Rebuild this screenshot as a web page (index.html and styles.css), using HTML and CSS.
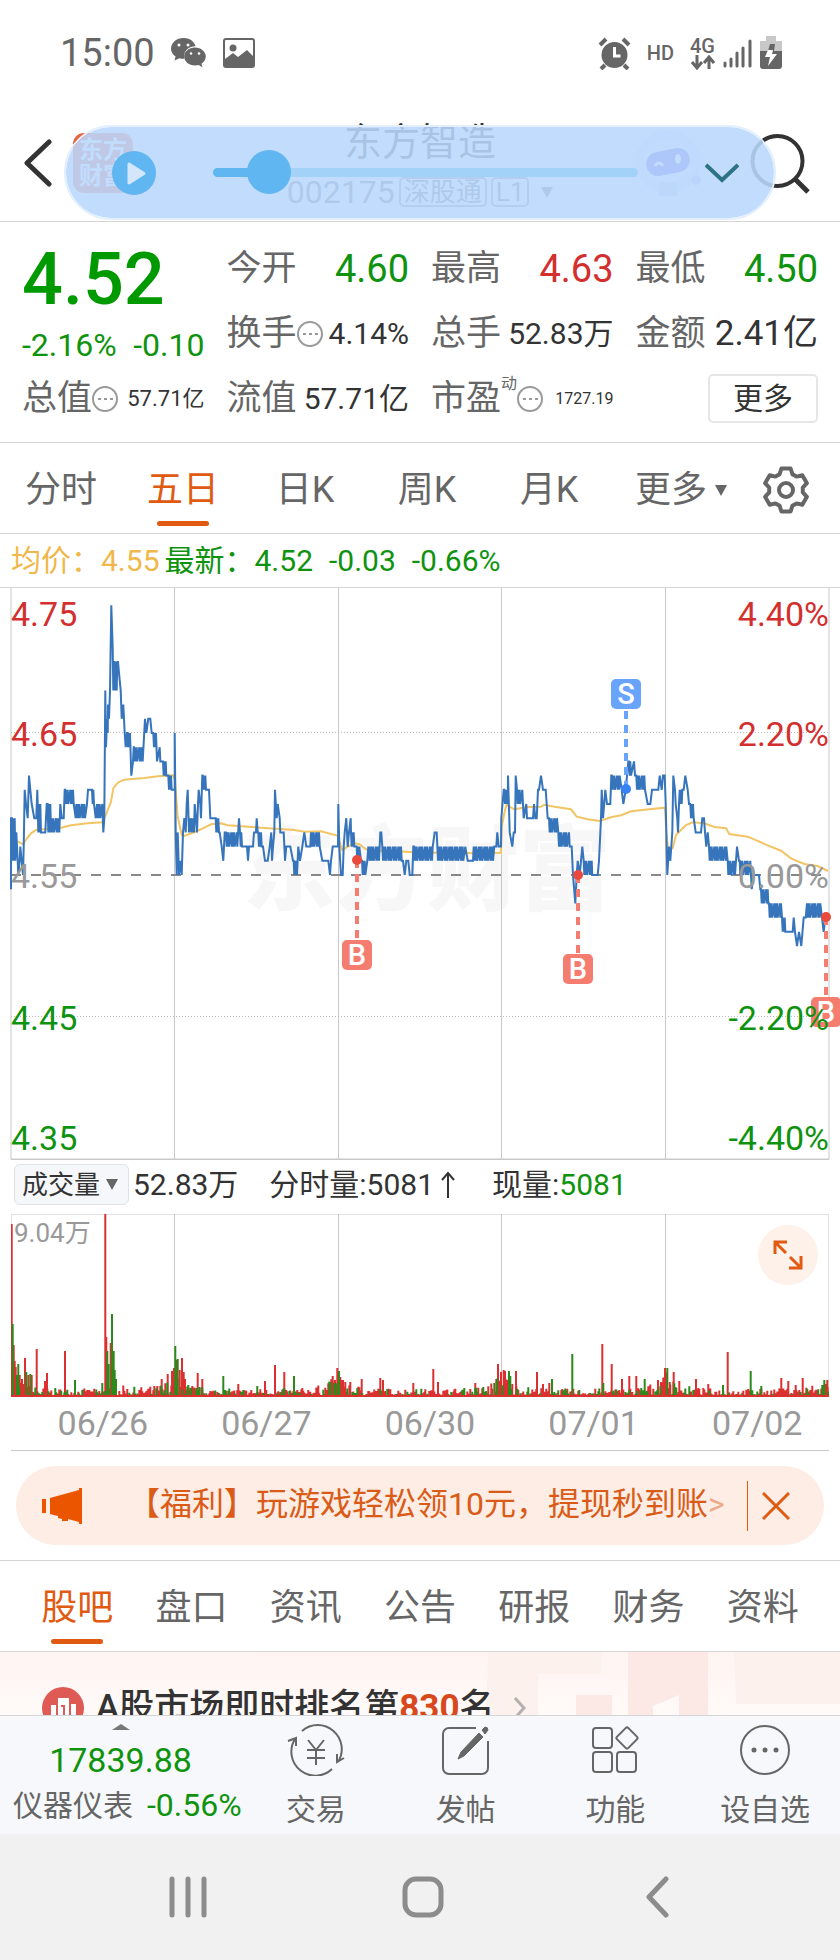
FILE: index.html
```html
<!DOCTYPE html>
<html lang="zh-CN">
<head>
  <meta charset="UTF-8">
  <meta name="viewport" content="width=device-width, initial-scale=1.0">
  <title>东方智造 002175</title>
  <link rel="stylesheet" href="styles.css">
</head>
<body>
  <div class="status-bar">
    <span class="clock">15:00</span>
    <svg class="status-icon" width="36" height="30" viewBox="0 0 36 30" fill="#666">
      <path d="M12.500 0C5.500 0 0 4.700 0 10.500c0 3.300 1.800 6.200 4.600 8.100L3.500 22.600l4.800-2.400c1.300.4 2.700.6 4.200.6l1-.1C13.300 19.900 13.200 19 13.200 18c0-5.600 5-9.700 11.300-9.700C23.500 3.500 18.500 0 12.500 0z"/>
      <path d="M24 9.500c-6 0-10.800 4-10.800 9s4.800 9 10.800 9c1.300 0 2.500-.2 3.600-.5l3.900 2.200-1-3.500c2.700-1.700 4.300-4.300 4.300-7.200 0-5-4.800-9-10.800-9z"/>
      <circle cx="8" cy="7" r="1.500" fill="#fff"/><circle cx="17" cy="7" r="1.500" fill="#fff"/>
      <circle cx="20" cy="15.500" r="1.300" fill="#fff"/><circle cx="28" cy="15.500" r="1.300" fill="#fff"/>
    </svg>
    <svg class="status-icon" width="32" height="30" viewBox="0 0 32 30">
      <rect x="1" y="1" width="30" height="28" rx="2" fill="#fff" stroke="#666" stroke-width="2"/>
      <circle cx="10" cy="10" r="3.500" fill="#666"/>
      <path d="M2 21l8-6 5 4 9-7 6 6v10H2z" fill="#666"/>
    </svg>
    <div class="status-right">
      <svg width="33" height="33" viewBox="0 0 33 33" fill="none" stroke="#666">
        <circle cx="16.500" cy="18" r="13" fill="#666" stroke="none"/>
        <path d="M2 8l6-6M31 8l-6-6M7 28l-4 4M26 28l4 4" stroke-width="4"/>
        <path d="M16.500 10v9h6" stroke="#fff" stroke-width="3"/>
      </svg>
      <span class="hd">HD</span>
      <span class="network">
        <span>4G</span>
        <svg width="24" height="15" viewBox="0 0 24 15" fill="none" stroke="#666" stroke-width="3">
          <path d="M6 0v12M1 7l5 6 5-6M18 14V3M13 8l5-6 5 6"/>
        </svg>
      </span>
      <svg width="29" height="30" viewBox="0 0 29 30" stroke="#666" stroke-width="3" stroke-linecap="round">
        <path d="M2 25v3M8 21v7M14 15v13M20 10v18M27 3v25"/>
      </svg>
      <svg class="battery" width="22" height="34" viewBox="0 0 22 34">
        <path d="M6 0h10v5h6v12H0V5h6z" fill="#c8c8c8"/>
        <path d="M0 15h22v15a3 3 0 0 1-3 3H3a3 3 0 0 1-3-3z" fill="#666"/>
        <path d="M10 8l-2 7h6l1-7z" fill="#666"/>
        <path d="M8 14h5l-1 4h5L8 30l2-9H5z" fill="#fff"/>
      </svg>
    </div>
  </div>

  <header class="header">
    <div class="header-left">
      <a class="icon-link" href="#" aria-label="返回">
        <svg width="28" height="48" viewBox="0 0 28 48" fill="none" stroke="#333" stroke-width="5" stroke-linecap="round" stroke-linejoin="round">
          <path d="M25 3L3 24l22 21"/>
        </svg>
      </a>
      <div class="logo">东方<br>财富</div>
    </div>
    <div class="stock">
      <h1>东方智造</h1>
      <p class="stock-code">002175 <span class="tag">深股通</span><span class="tag">L1</span><span class="tri"></span></p>
    </div>
    <div class="header-right">
      <svg width="66" height="70" viewBox="0 0 66 70">
        <circle cx="32" cy="34" r="32" fill="#e9ebf2"/>
        <ellipse cx="31" cy="33" rx="24" ry="22" fill="#f5f7fb"/>
        <rect x="10" y="22" width="44" height="24" rx="12" fill="#5a55e0" transform="rotate(-12 32 34)"/>
        <path d="M19 38q4-6 8 0" fill="none" stroke="#fff" stroke-width="3"/>
        <ellipse cx="42" cy="31" rx="3" ry="5" fill="#fff"/>
        <path d="M24 54l-2 14h20l-2-14z" fill="#cfd5e2"/>
        <circle cx="60" cy="52" r="5" fill="#bcc6da"/>
      </svg>
      <a class="icon-link" href="#" aria-label="搜索">
        <svg width="60" height="62" viewBox="0 0 60 62" fill="none" stroke="#333" stroke-width="4">
          <circle cx="27.500" cy="29" r="25"/>
          <path d="M45 47l13 13" stroke-width="5"/>
        </svg>
      </a>
    </div>
    <!-- floating player -->
    <div class="player">
      <button class="play-btn" aria-label="播放">
        <svg width="44" height="44" viewBox="0 0 44 44">
          <path d="M17 13l15 9.500L17 32z" fill="#d3e6fb" stroke="#d3e6fb" stroke-width="3" stroke-linejoin="round"/>
        </svg>
      </button>
      <input class="player-range" type="range" min="0" max="100" value="9" aria-label="播放进度">
      <button class="fold-btn" aria-label="收起">
        <svg width="34" height="20" viewBox="0 0 34 20" fill="none" stroke="#2d7286" stroke-width="4">
          <path d="M1 2l16 15L33 2"/>
        </svg>
      </button>
    </div>
  </header>

  <section class="quote">
    <div class="price-block">
      <p class="price">4.52</p>
      <p class="change"><span>-2.16%</span><span>-0.10</span></p>
    </div>
    <div class="cell"><span class="label">今开</span><span class="value-xl down">4.60</span></div>
    <div class="cell"><span class="label">最高</span><span class="value-xl up">4.63</span></div>
    <div class="cell"><span class="label">最低</span><span class="value-xl down">4.50</span></div>
    <div class="cell">
      <span class="label">换手<svg class="dots" viewBox="0 0 26 26"><circle cx="13" cy="13" r="12"/><path d="M6 13h3M12 13h3M18 13h3"/></svg></span>
      <span class="value-md">4.14%</span>
    </div>
    <div class="cell"><span class="label">总手</span><span class="value-md">52.83万</span></div>
    <div class="cell"><span class="label">金额</span><span class="value-lg">2.41亿</span></div>
    <div class="cell">
      <span class="label">总值<svg class="dots" viewBox="0 0 26 26"><circle cx="13" cy="13" r="12"/><path d="M6 13h3M12 13h3M18 13h3"/></svg></span>
      <span class="value-sm">57.71亿</span>
    </div>
    <div class="cell"><span class="label">流值</span><span class="value-md">57.71亿</span></div>
    <div class="cell">
      <span class="label">市盈<small class="sup">动</small><svg class="dots" viewBox="0 0 26 26"><circle cx="13" cy="13" r="12"/><path d="M6 13h3M12 13h3M18 13h3"/></svg></span>
      <span class="value-xs">1727.19</span>
    </div>
    <div class="cell cell-end"><button class="more-btn">更多</button></div>
  </section>

  <nav class="period-tabs">
    <a href="#">分时</a>
    <a class="active" href="#">五日</a>
    <a href="#">日K</a>
    <a href="#">周K</a>
    <a href="#">月K</a>
    <a href="#">更多<span class="tri"></span></a>
    <a href="#" aria-label="设置">
      <svg width="48" height="48" viewBox="0 0 48 48" fill="none" stroke="#666" stroke-width="4" stroke-linejoin="round">
        <path d="M28.600 2.500L30.400 8.200 34.500 10.600 40.300 9.300 44.900 17.200 40.800 21.600V26.400L44.900 30.800 40.300 38.700 34.500 37.400 30.400 39.800 28.600 45.500H19.400L17.600 39.800 13.500 37.400 7.700 38.700 3.100 30.800 7.200 26.400V21.600L3.100 17.200 7.700 9.300 13.500 10.600 17.600 8.200 19.400 2.500z"/>
        <circle cx="24" cy="24" r="7"/>
      </svg>
    </a>
  </nav>

  <p class="legend"><span class="avg">均价：4.55</span><span>最新：4.52</span><span class="gap">-0.03</span><span class="gap">-0.66%</span></p>

  <section class="charts">
    <svg class="price-chart" viewBox="0 0 818 571">
      <text class="watermark" x="232" y="315">东方财富</text>
      <path class="frame" d="M0 0V571H818V0M163.500 0V571M327.500 0V571M490.500 0V571M654.500 0V571"/>
      <path class="dotted" d="M0 144.500H818M0 428.500H818"/>
      <path class="zero" d="M0 287H818"/>
      <path id="avgLine" class="avg-line"/>
      <path id="priceLine" class="price-line"/>
      <g class="mark sell">
        <path d="M615 123V200"/><circle cx="615" cy="201" r="5"/>
        <rect x="600" y="91" width="30" height="30" rx="5"/><text x="615" y="116">S</text>
      </g>
      <g class="mark buy">
        <path d="M346 272V352"/><circle cx="346" cy="272" r="5"/>
        <rect x="331" y="352" width="30" height="30" rx="5"/><text x="346" y="377">B</text>
      </g>
      <g class="mark buy">
        <path d="M567 287V366"/><circle cx="567" cy="287" r="5"/>
        <rect x="552" y="366" width="30" height="30" rx="5"/><text x="567" y="391">B</text>
      </g>
      <g class="mark buy">
        <path d="M815 329V409"/><circle cx="815" cy="329" r="5"/>
        <rect x="800" y="409" width="30" height="30" rx="5"/><text x="815" y="434">B</text>
      </g>
      <g class="axis">
        <text class="up" x="0" y="38">4.75</text>
        <text class="up" x="0" y="158">4.65</text>
        <text class="flat" x="0" y="300">4.55</text>
        <text class="down" x="0" y="442">4.45</text>
        <text class="down" x="0" y="562">4.35</text>
      </g>
      <g class="axis axis-right">
        <text class="up" x="818" y="38">4.40%</text>
        <text class="up" x="818" y="158">2.20%</text>
        <text class="flat" x="818" y="300">0.00%</text>
        <text class="down" x="818" y="442">-2.20%</text>
        <text class="down" x="818" y="562">-4.40%</text>
      </g>
    </svg>

    <div class="volume-head">
      <span class="select-box">
        <select aria-label="指标"><option>成交量</option></select>
        <span class="tri"></span>
      </span>
      <span class="vol-total">52.83万</span>
      <span class="vol-minute">分时量:5081<svg width="20" height="28" viewBox="0 0 20 28" fill="none" stroke="#333" stroke-width="2"><path d="M10 27V2M4 9l6-7 6 7"/></svg></span>
      <span>现量:<span class="down">5081</span></span>
    </div>

    <div class="volume-wrap">
      <svg class="volume-chart" viewBox="0 0 818 183">
        <path class="frame" d="M0 183V0H818V183M163.500 0V183M327.500 0V183M490.500 0V183M654.500 0V183"/>
        <path id="volUp" class="vol-up"/>
        <path id="volDown" class="vol-down"/>
        <path class="vol-up" d="M0 182H818"/>
        <text class="vol-max" x="3" y="28">9.04万</text>
      </svg>
      <button class="expand-btn" aria-label="全屏">
        <svg width="30" height="30" viewBox="0 0 30 30" fill="none" stroke="#e05a12" stroke-width="3">
          <path d="M14 2H2v12M2 2l11 11M16 28h12V16M28 28L17 17"/>
        </svg>
      </button>
    </div>
    <div class="dates"><span>06/26</span><span>06/27</span><span>06/30</span><span>07/01</span><span>07/02</span></div>
  </section>

  <div class="banner">
    <svg width="40" height="36" viewBox="0 0 40 36" fill="#eb5500">
      <path d="M0 11h4v14H0zM8 10L37 2V0h3v36h-3v-2l-11-3v2h-6v-2l-4-1v-2l-8-2z"/>
    </svg>
    <a class="banner-text" href="#">【福利】玩游戏轻松领10元，提现秒到账<span class="fade">&gt;</span></a>
    <button class="close-btn" aria-label="关闭">
      <svg width="28" height="28" viewBox="0 0 28 28" fill="none" stroke="#e05a12" stroke-width="3"><path d="M1 1l26 26M27 1L1 27"/></svg>
    </button>
  </div>

  <nav class="info-tabs">
    <a class="active" href="#">股吧</a>
    <a href="#">盘口</a>
    <a href="#">资讯</a>
    <a href="#">公告</a>
    <a href="#">研报</a>
    <a href="#">财务</a>
    <a href="#">资料</a>
  </nav>

  <section class="rank">
    <svg class="rank-bg" width="354" height="63" viewBox="0 0 354 63">
      <path d="M2 0h113v22H52v41H0z" fill="#fdf1ee"/>
      <path d="M142 0h80v63h-29V43l-26 11v9h-25zM90 43h36v20H90z" fill="#fce8e5"/>
      <path d="M248 0h106v52h-104z" fill="#fdf1ee"/>
    </svg>
    <svg class="rank-icon" width="42" height="42" viewBox="0 0 42 42">
      <circle cx="21" cy="21" r="21" fill="#df5a55"/>
      <path d="M9 34V18h5v16zM16 34V11h11v23zM29 34V17h5v17z" fill="#fff"/>
      <path d="M19 19h3v9" fill="none" stroke="#df5a55" stroke-width="2"/>
    </svg>
    <a class="rank-text" href="#">A股市场即时排名第<em>830</em>名</a>
    <svg class="rank-icon" width="12" height="32" viewBox="0 0 12 32" fill="none" stroke="#b5b0b0" stroke-width="3"><path d="M1 6l9 10-9 10"/></svg>
  </section>

  <nav class="bottom-nav">
    <a class="index" href="#">
      <span class="tri-up"></span>
      <span class="index-value">17839.88</span>
      <span class="index-name">仪器仪表<b>-0.56%</b></span>
    </a>
    <a href="#">
      <svg width="58" height="52" viewBox="0 0 58 52" fill="none" stroke="#666" stroke-width="2">
        <path d="M15 7A24 24 0 0 1 51 38M45 45A24 24 0 0 1 8 15M1 17l8-3v8M50 30v8l7-4M21 16l8 10 8-10M29 26v15M20 26h18M20 34h18"/>
      </svg>
      交易
    </a>
    <a href="#">
      <svg width="50" height="52" viewBox="0 0 50 52" fill="none" stroke="#666" stroke-width="2">
        <path d="M35 4H8a6 6 0 0 0-6 6v34a6 6 0 0 0 6 6h33a6 6 0 0 0 6-6V17"/>
        <path d="M38 9l4 4-19 19-6 3 3-7zM41 6l3-3q3 0 3 3l-3 4z" fill="#666" stroke-width="1"/>
      </svg>
      发帖
    </a>
    <a href="#">
      <svg width="48" height="52" viewBox="0 0 48 52" fill="none" stroke="#666" stroke-width="2">
        <rect x="2" y="4" width="19" height="20" rx="3"/>
        <rect x="2" y="28" width="19" height="20" rx="3"/>
        <rect x="26" y="28" width="19" height="20" rx="3"/>
        <rect x="28" y="6" width="16" height="16" rx="2" transform="rotate(45 36 14)"/>
      </svg>
      功能
    </a>
    <a href="#">
      <svg width="50" height="52" viewBox="0 0 50 52" fill="none" stroke="#666" stroke-width="2">
        <circle cx="25" cy="26" r="24"/>
        <path d="M14 26h.01M25 26h.01M36 26h.01" stroke-width="5" stroke-linecap="round"/>
      </svg>
      设自选
    </a>
  </nav>

  <div class="system-nav">
    <button aria-label="最近任务"><svg width="38" height="42" viewBox="0 0 38 42" stroke="#8c8c8c" stroke-width="5" stroke-linecap="round"><path d="M3 3v36M19 3v36M35 3v36"/></svg></button>
    <button aria-label="主屏幕"><svg width="42" height="42" viewBox="0 0 42 42" fill="none" stroke="#8c8c8c" stroke-width="5"><rect x="3" y="3" width="36" height="36" rx="11"/></svg></button>
    <button aria-label="后退"><svg width="24" height="42" viewBox="0 0 24 42" fill="none" stroke="#8c8c8c" stroke-width="5" stroke-linecap="round" stroke-linejoin="round"><path d="M20 3L3 21l17 18"/></svg></button>
  </div>

  <script src="chart.js"></script>
</body>
</html>
```

FILE: styles.css
```css
* {
  box-sizing: border-box;
}

body {
  margin: 0;
  background-color: #fff;
  color: #333;
  font-family: Roboto, "Noto Sans CJK SC", sans-serif;
}

h1, p {
  margin: 0;
  font-weight: 400;
}

a {
  color: inherit;
  text-decoration: none;
}

button {
  border: none;
  padding: 0;
  background: none;
  color: inherit;
  font-family: inherit;
  cursor: pointer;
}

svg {
  display: block;
  flex: none;
}

.up {
  color: #d32f2f;
  fill: #d32f2f;
}

.down {
  color: #0f930f;
  fill: #0f930f;
}

.flat {
  fill: #999;
}

.tri {
  border: 6px solid transparent;
  border-top: 11px solid #666;
  border-bottom: none;
}

/* Status bar */
.status-bar {
  display: flex;
  align-items: center;
  gap: 16px;
  height: 104px;
  padding: 2px 58px 0 60px;
  color: #666;
}

.clock {
  font-size: 38px;
}

.status-right {
  display: flex;
  align-items: center;
  gap: 8px;
  margin-left: auto;
}

.hd {
  margin: 0 8px;
  font-size: 20px;
  font-weight: 500;
}

.network {
  display: flex;
  flex-direction: column;
  align-items: center;
  font-size: 20px;
  font-weight: 500;
  line-height: 18px;
}

/* Header */
.header {
  position: relative;
  display: grid;
  grid-template-columns: 1fr auto 1fr;
  height: 118px;
  border-bottom: 1px solid #d5d5d5;
}

.header-left,
.header-right {
  display: flex;
  align-items: center;
}

.header-left {
  gap: 21px;
  padding-left: 24px;
}

.header-right {
  justify-content: flex-end;
  gap: 48px;
  padding-right: 30px;
}

.logo {
  width: 60px;
  height: 60px;
  padding: 4px 0;
  border-radius: 11px;
  background-color: #e8623a;
  color: #fff;
  font-size: 24px;
  font-weight: 700;
  line-height: 26px;
  text-align: center;
}

.stock {
  padding-top: 13px;
  text-align: center;
}

.stock h1 {
  font-size: 38px;
  line-height: 50px;
}

.stock-code {
  display: flex;
  align-items: center;
  justify-content: center;
  gap: 4px;
  color: #666;
  font-size: 32px;
  line-height: 50px;
}

.tag {
  padding: 0 3px;
  border: 2px solid #888;
  border-radius: 5px;
  font-size: 26px;
  line-height: 26px;
}

.stock-code .tri {
  margin-left: 8px;
}

.player {
  position: absolute;
  top: 21px;
  left: 64px;
  right: 64px;
  display: flex;
  align-items: center;
  height: 95px;
  padding: 0 35px 0 46px;
  border: 2px solid #e3effd;
  border-radius: 48px;
  background-color: rgba(184, 215, 253, 0.88);
  background-clip: padding-box;
}

.play-btn {
  width: 44px;
  height: 44px;
  border-radius: 50%;
  background-color: #60b6f0;
}

.player-range {
  flex: 1;
  height: 44px;
  margin: 0 67px 0 57px;
  background: none;
  appearance: none;
}

.player-range::-webkit-slider-runnable-track {
  height: 9px;
  border-radius: 5px;
  background: linear-gradient(to right, #60b6f0 10%, #a3d2f8 10%);
}

.player-range::-webkit-slider-thumb {
  width: 44px;
  height: 44px;
  margin-top: -18px;
  border-radius: 50%;
  background-color: #60b6f0;
  appearance: none;
}

/* Quote */
.quote {
  display: grid;
  grid-template-columns: repeat(4, 1fr);
  grid-auto-rows: 65px;
  column-gap: 22px;
  padding: 14px 22px 11px;
  border-bottom: 1px solid #d5d5d5;
}

.price-block {
  grid-row: span 2;
  color: #009a00;
}

.price {
  font-size: 72px;
  font-weight: 500;
  line-height: 88px;
}

.change {
  display: flex;
  justify-content: space-between;
  color: #0f930f;
  font-size: 32px;
  line-height: 42px;
}

.cell {
  display: flex;
  align-items: center;
  justify-content: space-between;
  line-height: 50px;
  white-space: nowrap;
}

.cell-end {
  justify-content: flex-end;
}

.label {
  display: flex;
  align-items: center;
  color: #666;
  font-size: 35px;
}

.sup {
  align-self: flex-start;
  font-size: 16px;
  line-height: 20px;
}

.dots {
  width: 26px;
  height: 26px;
  fill: none;
  stroke: #999;
  stroke-width: 2;
}

.value-xl {
  font-size: 38px;
}

.value-lg {
  font-size: 35px;
}

.value-md {
  font-size: 30px;
}

.value-sm {
  font-size: 22px;
}

.value-xs {
  font-size: 16px;
}

.more-btn {
  padding: 0 23px;
  border: 2px solid #e6e6e6;
  border-radius: 5px;
  font-size: 30px;
  line-height: 45px;
}

/* Tabs */
.period-tabs,
.info-tabs {
  display: grid;
  border-bottom: 1px solid #d5d5d5;
  color: #666;
  font-size: 36px;
  line-height: 86px;
}

.period-tabs {
  grid-template-columns: repeat(5, 1fr) 142px 68px;
  padding-right: 20px;
}

.info-tabs {
  grid-template-columns: repeat(7, 1fr);
  padding: 0 20px;
  border-top: 1px solid #d5d5d5;
}

.period-tabs a,
.info-tabs a {
  position: relative;
  display: flex;
  align-items: center;
  justify-content: center;
  height: 90px;
  padding-top: 4px;
}

.period-tabs .tri {
  margin-left: 8px;
}

.active {
  color: #e05a12;
}

.active::after {
  content: "";
  position: absolute;
  bottom: 7px;
  left: 50%;
  width: 52px;
  height: 5px;
  margin-left: -26px;
  border-radius: 3px;
  background-color: #e05a12;
}

/* Charts */
.legend {
  display: flex;
  padding-left: 11px;
  color: #0f930f;
  font-size: 30px;
  line-height: 53px;
}

.avg {
  margin-right: 5px;
  color: #f0b84c;
}

.gap {
  margin-left: 16px;
}

.charts {
  padding: 0 11px;
  border-top: 1px solid #d5d5d5;
}

.price-chart {
  width: 100%;
  overflow: visible;
}

.frame {
  fill: none;
  stroke: #c8c8c8;
}

.dotted {
  stroke: #bbb;
  stroke-dasharray: 1 2;
}

.zero {
  stroke: #888;
  stroke-width: 2;
  stroke-dasharray: 10 10;
}

.avg-line {
  fill: none;
  stroke: #f2c464;
  stroke-width: 2;
}

.price-line {
  fill: none;
  stroke: #3674bb;
  stroke-width: 2;
}

.watermark {
  fill: #f7f7f7;
  font-size: 92px;
  font-weight: 900;
}

.mark path {
  stroke-width: 4;
  stroke-dasharray: 8 6;
}

.mark text {
  fill: #fff;
  stroke: none;
  font-size: 29px;
  font-weight: 500;
  text-anchor: middle;
}

.sell {
  fill: #68a4fb;
  stroke: #68a4fb;
}

.buy {
  fill: #f57d70;
  stroke: #f57d70;
}

.sell circle {
  fill: #3583f5;
}

.buy circle {
  fill: #ea4a3e;
}

.mark rect,
.mark circle {
  stroke: none;
}

.axis {
  font-size: 34px;
}

.axis-right {
  text-anchor: end;
}

.volume-head {
  display: flex;
  align-items: center;
  height: 55px;
  padding: 0 0 1px 3px;
  border-top: 1px solid #c8c8c8;
  font-size: 30px;
  line-height: 44px;
}

.volume-head > span {
  margin-bottom: 4px;
}

.select-box {
  display: flex;
  align-items: center;
  padding: 0 10px 0 7px;
  border: 1px solid #e0e2e6;
  border-radius: 6px;
  background-color: #f6f7fa;
}

.select-box select {
  width: 84px;
  height: 39px;
  padding: 0;
  border: none;
  background: none;
  color: #333;
  font-family: inherit;
  font-size: 26px;
  appearance: none;
}

.vol-total {
  margin: 0 31px 0 4px;
}

.vol-minute {
  display: flex;
  align-items: center;
  margin-right: 34px;
}

.vol-minute svg {
  margin-left: 4px;
}

.volume-wrap {
  position: relative;
}

.volume-chart {
  width: 100%;
}

.vol-up {
  stroke: #dc2f2f;
}

.vol-down {
  stroke: #2c8a1c;
}

.vol-up,
.vol-down {
  fill: none;
  stroke-width: 2;
}

.vol-max {
  fill: #999;
  font-size: 26px;
}

.expand-btn {
  position: absolute;
  top: 11px;
  right: 11px;
  display: flex;
  align-items: center;
  justify-content: center;
  width: 60px;
  height: 60px;
  border-radius: 50%;
  background-color: #fef1ea;
}

.dates {
  display: grid;
  grid-template-columns: repeat(5, 1fr);
  border-bottom: 1px solid #c8c8c8;
  color: #999;
  font-size: 34px;
  line-height: 53px;
  text-align: center;
}

.dates span {
  padding-left: 20px;
}

/* Banner */
.banner {
  display: flex;
  align-items: center;
  height: 79px;
  margin: 15px 16px;
  padding: 0 34px 0 26px;
  border-radius: 40px;
  background-color: #fdede4;
  color: #d95b17;
  font-size: 32px;
}

.banner-text {
  flex: 1;
  margin-left: 46px;
  padding-bottom: 4px;
  line-height: 44px;
  white-space: nowrap;
}

.fade {
  opacity: 0.45;
}

.close-btn {
  padding: 11px 0 11px 15px;
  background: linear-gradient(#e05a12, #e05a12) left center / 1px 50px no-repeat;
}

/* Rank teaser, cut off by the bottom bar */
.rank {
  position: relative;
  display: flex;
  align-items: center;
  height: 63px;
  padding: 48px 0 0 42px;
  overflow: hidden;
  background: linear-gradient(#fff4f2, #fffaf8);
}

.rank-bg {
  position: absolute;
  top: 0;
  right: 0;
}

.rank-icon,
.rank-text {
  position: relative;
}

.rank-text {
  margin: 0 20px 0 12px;
  font-size: 35px;
  font-weight: 500;
  line-height: 48px;
  white-space: nowrap;
}

.rank-text em {
  color: #d8481c;
  font-style: normal;
  font-weight: 700;
}

/* Bottom nav */
.bottom-nav {
  display: grid;
  grid-template-columns: 241px repeat(4, 1fr);
  height: 119px;
  border-top: 1px solid #d5d5d5;
  background-color: #f7f8fb;
  color: #666;
  font-size: 30px;
}

.bottom-nav a {
  display: flex;
  flex-direction: column;
  align-items: center;
  padding-top: 8px;
  line-height: 44px;
}

.bottom-nav a svg {
  margin-bottom: 12px;
}

.tri-up {
  border: 9px solid transparent;
  border-top: none;
  border-bottom: 6px solid #777;
}

.bottom-nav .index-value {
  color: #0f930f;
  font-size: 34px;
  line-height: 60px;
}

.bottom-nav .index-name {
  align-self: flex-start;
  padding-left: 13px;
  line-height: 30px;
  white-space: nowrap;
}

.index-name b {
  margin-left: 14px;
  color: #0f930f;
  font-size: 32px;
  font-weight: 400;
}

.system-nav {
  display: grid;
  grid-template-columns: repeat(3, 1fr);
  height: 126px;
  padding: 0 65px 0 70px;
  background-color: #f1f1f1;
}

.system-nav button {
  display: flex;
  align-items: center;
  justify-content: center;
}
```

FILE: chart.js
```javascript
// x is in thirds of a chart pixel, the second value is ticks of 0.01 from 4.55.
// Four values mean a band: from x, to x, low tick, high tick.
var prices = [
  // 06/26
  [0,-1],[0,4],[3,14,1,4],[16,3],[20,1],[22,0],[26,1],[28,2],[32,1],[36,0],[38,2],[41,6],[45,5],[50,4],[54,7],[58,6],[62,5],[70,4],[76,4],[79,6],
  [80,92,3,5],[94,3],[103,3],[107,5],[110,118,3,5],[119,146,3,4],[148,5],[152,4],[158,4],[161,6],[162,192,5,6],[194,4],[196,228,4,5],
  [231,6],[240,6],[243,250,5,6],[254,4],[258,274,4,5],[277,3],[280,4],[283,13],[285,9],[288,11],[290,10],[291,12],[294,11],[297,13],
  [301,19],[305,16],[307,13],[310,15],[311,320,13,15],[321,15],[325,14],[329,13],[332,11],[337,12],[341,10],[344,9],[348,10],[349,358,9,10],
  [361,7],[366,8],[368,9],[369,398,8,9],[402,11],[406,10],[412,11],[418,11],[422,10],[427,436,9,10],[438,8],[446,9],[448,8],[454,8],
  [456,470,7,8],[472,486,6,7],[489,6],[491,6],
  // 06/27
  [491,10],[494,3],[497,0],[500,3],[504,0],[508,1],[512,0],[516,3],[520,4],[524,3],[527,5],[530,6],[534,3],[539,550,3,4],[551,5],[558,3],
  [561,5],[563,6],[568,5],[570,4],[574,7],[575,590,6,7],[594,6],[598,4],[613,4],[614,624,3,4],[626,3],[632,2],[637,1],[641,3],
  [645,680,2,3],[684,4],[687,694,2,3],[708,2],[711,1],[714,2],[726,2],[729,3],[735,3],[737,4],[740,3],[742,752,2,3],[756,2],[762,1],
  [770,1],[776,2],[781,3],[783,1],[786,2],[790,3],[792,6],[797,4],[800,5],[806,4],[808,3],[818,3],[822,1],[826,2],[838,2],[846,1],
  [848,858,0,1],[862,2],[867,1],[874,2],[880,3],[886,2],[898,2],[900,930,2,3],[934,1],[952,1],[957,0],[960,1],[965,2],[981,2],
  // 06/30
  [982,5],[985,2],[990,0],[995,0],[998,2],[1001,3],[1006,4],[1010,2],[1014,3],[1019,4],[1020,1034,2,3],[1037,1046,1,2],[1050,1],
  [1053,1069,0,1],[1072,2],[1076,1],[1078,1104,1,2],[1108,3],[1111,3],[1114,1172,1,2],[1176,1],[1181,0],[1186,1],[1192,1],[1196,0],
  [1204,0],[1207,2],[1209,1265,1,2],[1271,3],[1277,3],[1281,1],[1283,1364,1,2],[1370,1],[1386,1],[1388,1446,1,2],[1450,2],[1456,2],[1459,3],[1463,2],[1470,2],
  // 07/01
  [1471,4],[1478,6],[1480,1490,5,6],[1491,7],[1496,3],[1504,2],[1508,3],[1512,3],[1514,7],[1518,1536,5,6],[1538,4],[1546,5],[1548,4],
  [1566,4],[1569,5],[1573,4],[1577,4],[1581,6],[1584,6],[1590,7],[1596,6],[1604,6],[1610,4],[1614,1638,3,4],[1642,1676,2,3],[1682,2],
  [1686,0],[1693,-2],[1697,0],[1700,1],[1706,0],[1714,2],[1718,1748,0,1],[1754,0],[1760,0],[1764,1],[1770,4],[1772,6],[1776,4],
  [1783,6],[1788,5],[1798,5],[1801,7],[1802,1826,6,7],[1832,6],[1837,5],[1844,6],[1848,7],[1852,8],[1854,1860,7,8],[1869,8],[1872,7],
  [1876,1906,6,7],[1910,5],[1918,5],[1923,6],[1942,6],[1946,7],[1952,6],[1956,7],[1961,7],
  // 07/02
  [1964,5],[1969,0],[1974,2],[1978,1],[1984,3],[1987,7],[1992,6],[1994,5],[1999,4],[2001,3],[2004,5],[2006,2014,5,6],[2018,6],[2023,7],
  [2030,6],[2034,5],[2038,2052,4,5],[2054,3],[2070,3],[2074,4],[2079,4],[2082,3],[2086,2],[2090,3],[2094,2146,1,2],[2150,2172,0,1],
  [2178,2],[2184,1],[2186,2218,0,1],[2222,-1],[2228,0],[2244,0],[2248,-1],[2250,2272,-2,-1],[2274,2310,-3,-2],[2313,2326,-4,-3],
  [2345,-4],[2348,-3],[2352,-4],[2358,-5],[2364,-4],[2371,-5],[2378,-3],[2384,-3],[2388,2429,-3,-2],[2438,-4],[2443,-3],[2448,-3]
];

var averages = [
  [0,785],[22,785],[36,793],[48,775],[60,760],[75,750],[100,748],[145,745],[180,736],[230,730],[274,727],[284,705],[300,665],[307,625],
  [320,608],[340,599],[400,594],[440,589],[486,586],[492,600],[500,710],[512,765],[520,768],[545,758],[570,748],[600,733],[630,730],
  [650,736],[750,743],[850,750],[880,755],[930,754],[980,767],[984,780],[993,810],[1010,800],[1030,790],[1045,793],[1065,808],[1090,812],
  [1150,813],[1227,818],[1350,818],[1390,820],[1470,818],[1472,740],[1480,700],[1487,672],[1495,680],[1510,688],[1550,681],[1590,680],
  [1600,674],[1630,680],[1680,688],[1697,710],[1730,718],[1765,723],[1800,712],[1830,706],[1860,694],[1900,689],[1962,683],[1966,760],
  [1972,810],[1985,805],[1995,765],[2010,750],[2025,735],[2045,727],[2080,730],[2110,741],[2145,745],[2155,762],[2210,770],[2270,796],
  [2310,812],[2340,835],[2380,852],[2420,858],[2451,873]
];

// x, height, 1 = up / 0 = down
var spikes = [
  [2,173,1],[5,73,0],[8,52,1],[11,36,1],[14,30,1],[18,22,0],[22,33,0],[26,22,1],[33,18,1],[42,39,1],[46,25,0],[52,22,1],[58,23,0],[62,22,1],[77,48,1],
  [102,16,1],[108,24,1],[162,46,1],[192,17,0],[274,14,0],[283,183,1],[286,60,1],[289,46,0],[293,33,0],[299,54,1],[303,83,0],[308,46,0],[311,27,0],
  [315,18,0],[452,18,1],[470,23,1],[483,26,1],[489,29,1],[493,51,0],[497,37,1],[500,38,0],[506,27,1],[513,39,1],[518,25,1],[522,18,1],[560,24,1],
  [574,18,1],[637,21,0],[682,13,1],[739,11,0],[762,16,1],[792,32,1],[820,25,1],[849,21,0],[958,15,0],[965,21,1],[972,17,1],[979,29,1],[984,26,0],
  [990,17,1],[996,17,1],[1003,15,1],[1018,15,1],[1052,18,1],[1108,19,1],[1116,17,1],[1207,14,1],[1267,28,1],[1281,15,1],[1393,14,1],[1456,18,1],
  [1461,33,1],[1470,25,1],[1478,27,1],[1482,26,1],[1488,17,1],[1494,26,0],[1498,21,0],[1515,26,1],[1578,25,1],[1596,13,1],[1615,14,1],[1623,18,0],
  [1684,43,0],[1774,53,1],[1777,14,0],[1802,33,1],[1833,18,1],[1855,21,1],[1876,21,1],[1901,18,0],[1941,17,1],[1950,15,1],[1962,29,1],[1969,29,0],
  [1976,15,1],[1988,25,1],[2005,16,1],[2055,18,1],[2092,13,1],[2136,12,0],[2150,45,1],[2219,26,0],[2251,11,0],[2311,19,1],[2332,16,1],[2354,12,1],
  [2375,19,1],[2440,17,0],[2445,13,1],[2450,10,1]
];

function toPath(points) {
  return "M" + points.map(function (p) {
    return (p[0] / 3).toFixed(1) + " " + p[1].toFixed(1);
  }).join("L");
}

var line = [];
prices.forEach(function (p) {
  if (p.length === 2) {
    line.push([p[0], 287 - p[1] * 14.2]);
    return;
  }
  // swing between the two ticks, with a short rest now and then
  var high = true;
  for (var x = p[0], i = 0; x <= p[1]; x += i % 6 === 5 ? 6 : 2, i++) {
    line.push([x, 287 - (high ? p[3] : p[2]) * 14.2]);
    high = !high;
  }
});
document.getElementById("priceLine").setAttribute("d", toPath(line));

document.getElementById("avgLine").setAttribute("d", toPath(averages.map(function (p) {
  return [p[0], p[1] / 3 - 8];
})));

var up = "";
var down = "";
function addBar(x, height, rising) {
  var bar = "M" + (x / 3).toFixed(1) + " 183v-" + height.toFixed(1);
  if (rising) {
    up += bar;
  } else {
    down += bar;
  }
}

// minute volumes are larger around each open
var seed = 7;
function random() {
  seed = (seed * 16807) % 2147483647;
  return seed / 2147483647;
}
for (var x = 1; x < 2454; x += 3) {
  var day = x % 491;
  var near = Math.min(day, 491 - day);
  var size = 5 + 13 * Math.exp(-near / 38);
  if (x > 285 && x < 400) {
    size += 8 * Math.exp(-(x - 285) / 40);
  }
  addBar(x, 2 + size * Math.pow(random(), 2) * 1.3, random() > 0.3);
}
spikes.forEach(function (s) {
  addBar(s[0], s[1], s[2]);
});
document.getElementById("volUp").setAttribute("d", up);
document.getElementById("volDown").setAttribute("d", down);
```
